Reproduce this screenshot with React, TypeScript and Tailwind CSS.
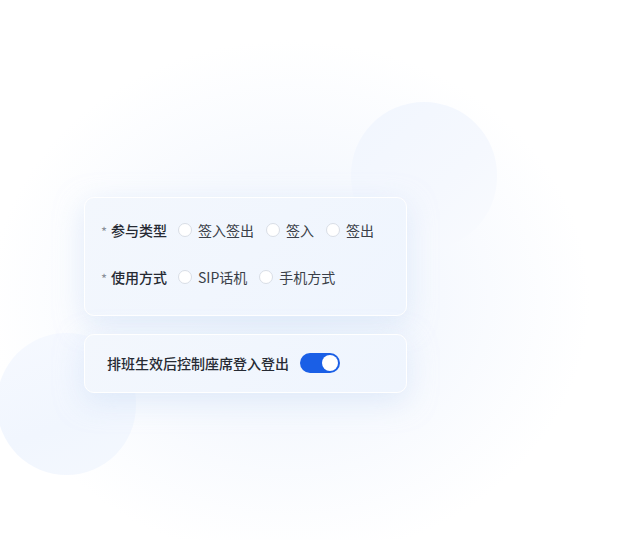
import React, { useState } from 'react'

type Option = { value: string; label: string }

const TYPE_OPTIONS: Option[] = [
    { value: 'both', label: '签入签出' },
    { value: 'in', label: '签入' },
    { value: 'out', label: '签出' }
]

const MODE_OPTIONS: Option[] = [
    { value: 'sip', label: 'SIP话机' },
    { value: 'phone', label: '手机方式' }
]

function RadioRow({ label, options }: { label: string; options: Option[] }) {
    const [value, setValue] = useState<string | null>(null)
    return (
        <div className="flex items-center h-[22px]">
            <span className="text-[13px] text-[#8a8f99] w-[10px] leading-none pt-[3px]">*</span>
            <span className="text-[14px] font-medium text-[#262a33] w-[67px]">{label}</span>
            <div className="flex items-center gap-3">
                {options.map((o) => (
                    <label
                        key={o.value}
                        onClick={() => setValue(o.value)}
                        className="flex items-center gap-[6px] cursor-pointer"
                    >
                        <span className={`w-[14px] h-[14px] rounded-full border bg-white ${value == o.value ? 'border-[#1a5fe6] border-4' : 'border-[#d9dee6]'}`} />
                        <span className="text-[14px] text-[#3a3f48]">{o.label}</span>
                    </label>
                ))}
            </div>
        </div>
    )
}

export default function App() {
    const [on, setOn] = useState(true)

    return (
        <div
            className="relative w-[640px] h-[540px] overflow-hidden bg-white bg-[radial-gradient(ellipse_300px_260px_at_290px_300px,#eff5fd_0%,#f6f9fe_50%,#ffffff_100%)]"
            style={{ fontFamily: '"Noto Sans CJK SC", "Noto Sans", sans-serif' }}
        >
            {/* decorative blobs */}
            <div className="absolute left-[351px] top-[102px] w-[146px] h-[148px] rounded-full bg-[linear-gradient(135deg,#f1f6fe_0%,#f5f8fe_60%,#f9fbfe_100%)]" />
            <div className="absolute left-[-3px] top-[333px] w-[139px] h-[142px] rounded-full bg-[linear-gradient(160deg,#f6f9ff_0%,#f1f6fe_60%,#f4f8fe_100%)]" />

            <div className="relative pt-[197px] pl-[84px] flex flex-col gap-[18px]">
                <div className="w-[323px] h-[119px] rounded-[10px] border border-white bg-[linear-gradient(135deg,#f3f7fd_0%,#eff5fe_100%)] shadow-[0_8px_28px_rgba(205,222,246,0.55)] pt-[21px] pl-[16px] flex flex-col gap-[25px]">
                    <RadioRow label="参与类型" options={TYPE_OPTIONS} />
                    <RadioRow label="使用方式" options={MODE_OPTIONS} />
                </div>

                <div className="w-[323px] h-[59px] rounded-[10px] border border-white bg-[linear-gradient(135deg,#f3f7fd_0%,#eff5fe_100%)] shadow-[0_8px_28px_rgba(205,222,246,0.55)] pl-[22px] pb-[1px] flex items-center gap-[11px]">
                    <span className="text-[14px] font-medium text-[#262a33]">排班生效后控制座席登入登出</span>
                    <button
                        onClick={() => setOn(!on)}
                        className={`w-[40px] h-[20px] rounded-full flex items-center px-[2px] ${on ? 'bg-[#1a5fe6] justify-end' : 'bg-[#c9cfd9] justify-start'}`}
                    >
                        <span className="w-[16px] h-[16px] rounded-full bg-white" />
                    </button>
                </div>
            </div>
        </div>
    )
}
